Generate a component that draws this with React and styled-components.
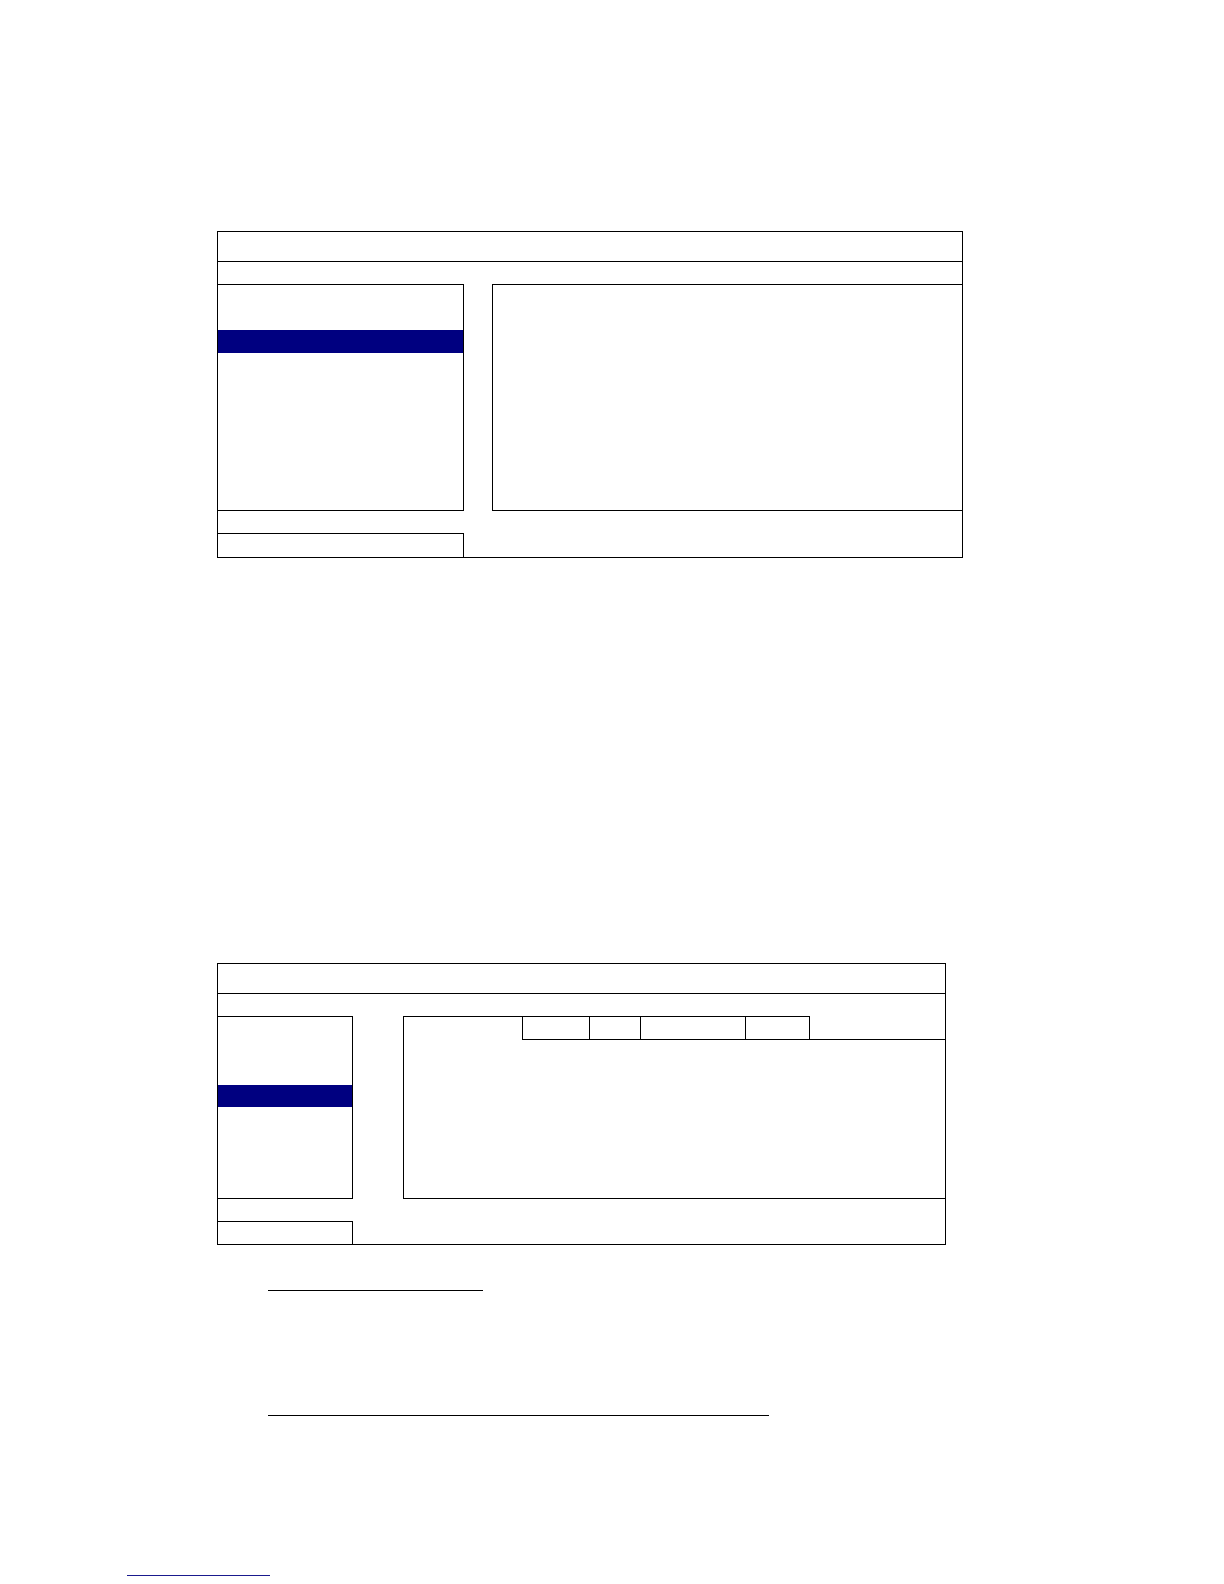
import styled, { createGlobalStyle } from "styled-components"

const GlobalStyle = createGlobalStyle`
    * {
        box-sizing: border-box;
    }
    body {
        margin: 0;
        background: #ffffff;
        font-family: "Liberation Serif", "Times New Roman", serif;
    }
`

const StyledPage = styled.div`
    display: flex;
    flex-direction: column;
    width: 1224px;
    min-height: 1584px;
    padding-top: 231px;
    background: #ffffff;
`
const StyledWindow = styled.div`
    display: flex;
    flex-direction: column;
    width: ${(p) => p.$width}px;
    margin-left: 217px;
    margin-top: ${(p) => p.$top || 0}px;
    border: 1px solid #000;
`
const StyledTitleBar = styled.div`
    height: 30px;
    border-bottom: 1px solid #000;
`
const StyledBand = styled.div`
    height: 22px;
`
const StyledBody = styled.div`
    display: flex;
    height: ${(p) => p.$height}px;
`
const StyledMenu = styled.ul`
    display: flex;
    flex-direction: column;
    flex: none;
    width: ${(p) => p.$width}px;
    margin: 0;
    padding: 0;
    list-style: none;
    border-top: 1px solid #000;
    border-right: 1px solid #000;
    border-bottom: 1px solid #000;
    overflow: hidden;
`
const StyledMenuItem = styled.li`
    flex: none;
    height: ${(p) => p.$height}px;
    background: ${(p) => (p.$active ? "#000080" : "transparent")};
`
const StyledGap = styled.div`
    flex: none;
    width: ${(p) => p.$width}px;
`
const StyledPanel = styled.div`
    flex: 1;
    display: flex;
    flex-direction: column;
    border-left: 1px solid #000;
    border-top: ${(p) => (p.$tabs ? "none" : "1px solid #000")};
    border-bottom: 1px solid #000;
`
const StyledTabStrip = styled.div`
    display: flex;
    height: 24px;
    margin-left: -1px;
`
const StyledTabLead = styled.div`
    flex: none;
    width: ${(p) => p.$width}px;
    border-left: 1px solid #000;
    border-top: 1px solid #000;
`
const StyledTab = styled.div`
    flex: none;
    width: ${(p) => p.$width}px;
    border-top: 1px solid #000;
    border-bottom: 1px solid #000;
    border-left: 1px solid #000;
    border-right: ${(p) => (p.$last ? "1px solid #000" : "none")};
`
const StyledTabFill = styled.div`
    flex: 1;
    border-bottom: 1px solid #000;
`
const StyledStatusRow = styled.div`
    display: flex;
`
const StyledStatusBox = styled.div`
    flex: none;
    width: ${(p) => p.$width}px;
    height: ${(p) => p.$height}px;
    border-top: 1px solid #000;
    border-right: 1px solid #000;
`
const StyledHeading = styled.div`
    width: ${(p) => p.$width}px;
    height: 22px;
    margin-left: 268px;
    margin-top: ${(p) => p.$top}px;
    border-bottom: 1px solid #000;
`
const StyledFootnoteLink = styled.a`
    display: block;
    width: 143px;
    height: 22px;
    margin-left: 127px;
    margin-top: 138px;
    border-bottom: 1px solid #1a1a8e;
`

const MenuWindow = ({ width, top, menuWidth, gap, bodyHeight, rowHeight, active, rows, tabs, statusHeight }) => {
    return (
        <StyledWindow $width={width} $top={top}>
            <StyledTitleBar />
            <StyledBand />
            <StyledBody $height={bodyHeight}>
                <StyledMenu $width={menuWidth}>
                    {Array.from({ length: rows }).map((_, i) => (
                        <StyledMenuItem key={i} $height={rowHeight} $active={i === active} />
                    ))}
                </StyledMenu>
                <StyledGap $width={gap} />
                <StyledPanel $tabs={!!tabs}>
                    {tabs && (
                        <StyledTabStrip>
                            <StyledTabLead $width={tabs.lead} />
                            {tabs.widths.map((w, i) => (
                                <StyledTab key={i} $width={w} $last={i === tabs.widths.length - 1} />
                            ))}
                            <StyledTabFill />
                        </StyledTabStrip>
                    )}
                </StyledPanel>
            </StyledBody>
            <StyledBand />
            <StyledStatusRow>
                <StyledStatusBox $width={menuWidth} $height={statusHeight} />
            </StyledStatusRow>
        </StyledWindow>
    )
}

const App = () => {
    return (
        <>
            <GlobalStyle />
            <StyledPage>
                <MenuWindow
                    width={746}
                    menuWidth={246}
                    gap={28}
                    bodyHeight={227}
                    rowHeight={22.5}
                    rows={10}
                    active={2}
                    statusHeight={24}
                />
                <MenuWindow
                    width={729}
                    top={405}
                    menuWidth={135}
                    gap={50}
                    bodyHeight={183}
                    rowHeight={22.6}
                    rows={8}
                    active={3}
                    statusHeight={23}
                    tabs={{ lead: 119, widths: [67, 51, 105, 65] }}
                />
                <StyledHeading $width={215} $top={24} />
                <StyledHeading $width={501} $top={103} />
                <StyledFootnoteLink />
            </StyledPage>
        </>
    )
}

export default App
